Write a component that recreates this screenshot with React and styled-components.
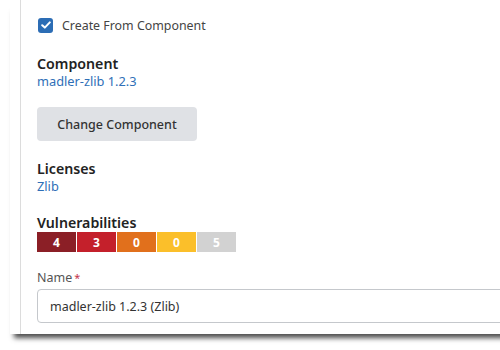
import React, { useState } from 'react'
import styled, { createGlobalStyle } from 'styled-components'

const GlobalStyle = createGlobalStyle`
  html, body {
    margin: 0;
    padding: 0;
    background: #fff;
    overflow: hidden;
  }
  body {
    font-family: "Noto Sans", "Open Sans", sans-serif;
  }
`

const Page = styled.div`
  width: 500px;
  height: 350px;
  padding-left: 10px;
  box-sizing: border-box;
  overflow: hidden;
`

const Dialog = styled.div`
  width: 560px;
  height: 334px;
  background: #fff;
  padding-left: 10px;
  box-sizing: border-box;
  box-shadow: 0 8px 5px -4px rgba(0, 0, 0, 0.7);
`

const Body = styled.div`
  height: 100%;
  border-left: 1px solid #dcdcdc;
  padding: 16px 0 0 16px;
  box-sizing: border-box;
  display: flex;
  flex-direction: column;
  align-items: flex-start;
`

const CheckRow = styled.label`
  display: flex;
  align-items: center;
  gap: 9px;
  font-size: 12.4px;
  color: #444;
  height: 18px;
  margin-left: 1px;
`

const CheckBox = styled.span`
  width: 15px;
  height: 15px;
  border-radius: 3px;
  background: ${p => (p.checked ? '#2c6db5' : '#fff')};
  border: ${p => (p.checked ? 'none' : '1px solid #999')};
  display: flex;
  align-items: center;
  justify-content: center;
`

const Field = styled.div`
  margin-top: ${p => p.gap || 0}px;
  display: flex;
  flex-direction: column;
  align-items: flex-start;
`

const Heading = styled.div`
  font-size: 14.2px;
  font-weight: 600;
  color: #222;
  line-height: 19px;
`

const Link = styled.a`
  font-size: 12.8px;
  color: #2f6fb7;
  line-height: 17px;
  text-decoration: none;
`

const Button = styled.button`
  margin-top: 17px;
  width: 160px;
  height: 34px;
  border: none;
  border-radius: 4px;
  background: #dfe1e5;
  color: #333;
  font-family: inherit;
  font-size: 12.5px;
  font-weight: 500;
  cursor: pointer;
`

const VulnBar = styled.div`
  display: flex;
  gap: 1px;
`

const VulnCell = styled.div`
  width: 39px;
  height: 20px;
  background: ${p => p.color};
  color: #fff;
  font-size: 12px;
  font-weight: 700;
  display: flex;
  align-items: center;
  justify-content: center;
`

const Label = styled.div`
  font-size: 12.5px;
  color: #555;
  line-height: 17px;
`

const Required = styled.span`
  color: #c4344a;
  margin-left: 2px;
  font-size: 11px;
  vertical-align: top;
`

const Input = styled.input`
  margin-top: 3px;
  width: 480px;
  height: 34px;
  box-sizing: border-box;
  border: 1px solid #c5c8cc;
  border-radius: 4px;
  padding: 0 12px;
  font-family: inherit;
  font-size: 12.5px;
  color: #333;
  outline: none;
`

const vulns = [
  { n: 4, color: '#8b1f26' },
  { n: 3, color: '#c4202b' },
  { n: 0, color: '#e1701c' },
  { n: 0, color: '#fbbf2a' },
  { n: 5, color: '#d2d2d2' },
]

function App() {
  const [checked, setChecked] = useState(true)
  const [name, setName] = useState('madler-zlib 1.2.3 (Zlib)')

  return (
    <>
      <GlobalStyle />
      <Page>
        <Dialog>
          <Body>
            <CheckRow onClick={() => setChecked(!checked)}>
              <CheckBox checked={checked}>
                {checked && (
                  <svg width="10" height="8" viewBox="0 0 10 8">
                    <path d="M1.2 4.2 L3.8 6.6 L8.8 1.4" stroke="#fff" strokeWidth="2" fill="none" strokeLinecap="round" strokeLinejoin="round" />
                  </svg>
                )}
              </CheckBox>
              Create From Component
            </CheckRow>

            <Field gap={20}>
              <Heading>Component</Heading>
              <Link href="#">madler-zlib 1.2.3</Link>
            </Field>

            <Button>Change Component</Button>

            <Field gap={18}>
              <Heading>Licenses</Heading>
              <Link href="#">Zlib</Link>
            </Field>

            <Field gap={18}>
              <Heading>Vulnerabilities</Heading>
              <VulnBar>
                {vulns.map((v, i) => (
                  <VulnCell key={i} color={v.color}>{v.n}</VulnCell>
                ))}
              </VulnBar>
            </Field>

            <Field gap={17}>
              <Label>Name<Required>*</Required></Label>
              <Input value={name} onChange={e => setName(e.target.value)} />
            </Field>
          </Body>
        </Dialog>
      </Page>
    </>
  )
}

export default App
